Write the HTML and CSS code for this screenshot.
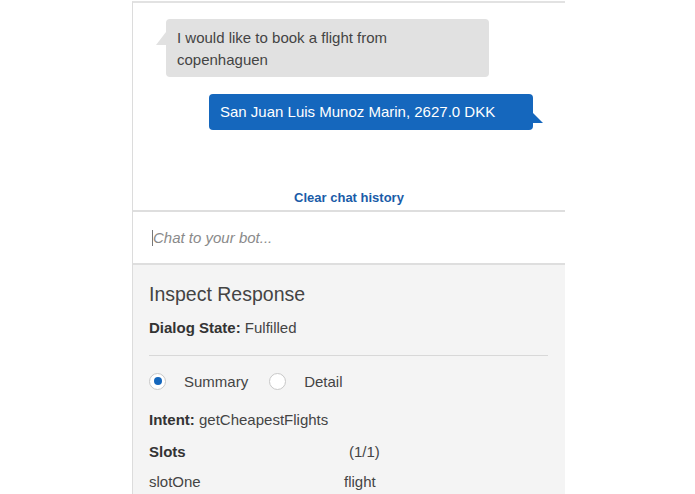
FILE: index.html
```html
<!DOCTYPE html>
<html>
<head>
<meta charset="utf-8">
<link rel="stylesheet" href="styles.css">
</head>
<body>
<div class="panel">
  <div class="chat">
    <div class="row left">
      <div class="bubble gray">I would like to book a flight from copenhaguen</div>
    </div>
    <div class="row right">
      <div class="bubble blue">San Juan Luis Munoz Marin, 2627.0 DKK</div>
    </div>
    <div class="clear">Clear chat history</div>
  </div>
  <div class="input">
    <span class="caret"></span><span class="placeholder">Chat to your bot...</span>
  </div>
  <div class="inspect">
    <h2 class="title">Inspect Response</h2>
    <div class="state"><b>Dialog State:</b> Fulfilled</div>
    <hr class="sep">
    <div class="radios">
      <span class="radio on"></span><span class="rlabel">Summary</span>
      <span class="radio"></span><span class="rlabel">Detail</span>
    </div>
    <div class="intent"><b>Intent:</b> getCheapestFlights</div>
    <div class="slots head"><b class="k">Slots</b><span class="v">(1/1)</span></div>
    <div class="slots row2"><span class="k">slotOne</span><span class="v2">flight</span></div>
  </div>
</div>
</body>
</html>
```
FILE: styles.css
```css
html, body {
  margin: 0;
  padding: 0;
  background: #fff;
  font-family: "Liberation Sans", Arial, sans-serif;
  color: #444;
}
.panel {
  margin-left: 132px;
  margin-top: 1px;
  width: 432px;
  border-left: 1px solid #dcdcdc;
  border-top: 2px solid #e2e2e2;
  height: 493px;
  overflow: hidden;
  display: flex;
  flex-direction: column;
}
.chat {
  height: 207px;
  display: flex;
  flex-direction: column;
}
.row {
  display: flex;
}
.row.left {
  padding-left: 33px;
  padding-top: 16px;
}
.row.right {
  padding-left: 76px;
  padding-top: 17px;
}
.bubble {
  position: relative;
  font-size: 15px;
  line-height: 22px;
  border-radius: 4px;
}
.bubble.gray {
  background: #e1e1e1;
  color: #444;
  width: 301px;
  padding: 8px 11px 6px 11px;
  height: 44px;
}
.bubble.gray::before {
  content: "";
  position: absolute;
  left: -10px;
  top: 13px;
  border-right: 10px solid #e1e1e1;
  border-top: 13px solid transparent;
}
.bubble.blue {
  background: #1567bd;
  color: #fff;
  width: 302px;
  padding: 7px 11px;
  height: 22px;
}
.bubble.blue::after {
  content: "";
  position: absolute;
  right: -10px;
  top: 19px;
  border-left: 10px solid #1567bd;
  border-top: 10px solid transparent;
}
.clear {
  margin-top: auto;
  text-align: center;
  font-size: 13px;
  font-weight: bold;
  color: #1a5ca8;
  padding-bottom: 5px;
}
.input {
  border-top: 2px solid #dedede;
  border-bottom: 2px solid #dedede;
  height: 51px;
  display: flex;
  align-items: center;
  padding-left: 19px;
}
.caret {
  width: 1px;
  height: 16px;
  background: #777;
}
.placeholder {
  font-style: italic;
  font-size: 15px;
  color: #8a8a8a;
}
.inspect {
  flex: 1;
  background: #f4f4f4;
  padding: 0 16px;
  font-size: 15px;
  color: #444;
}
.title {
  font-size: 19.5px;
  font-weight: normal;
  margin: 17px 0 0 0;
  line-height: 24px;
  color: #444;
}
.state {
  margin-top: 12px;
  line-height: 20px;
}
b { color: #333; }
.sep {
  border: 0;
  border-top: 1px solid #d8d8d8;
  margin: 17px 0 0 0;
  width: 399px;
}
.radios {
  display: flex;
  align-items: center;
  margin-top: 15px;
  height: 20px;
}
.radio {
  width: 17px;
  height: 17px;
  border-radius: 50%;
  border: 1px solid #c8c8c8;
  background: #fff;
  box-sizing: border-box;
  position: relative;
}
.radio.on::after {
  content: "";
  position: absolute;
  left: 3.5px;
  top: 3.5px;
  width: 8px;
  height: 8px;
  border-radius: 50%;
  background: #1567bd;
}
.rlabel {
  margin-left: 18px;
  margin-right: 21px;
}
.intent {
  margin-top: 19px;
  line-height: 20px;
}
.slots {
  display: flex;
  line-height: 20px;
  margin-top: 12px;
}
.slots.row2 { margin-top: 10px; }
.slots .k { width: 200px; }
.slots .v2 { margin-left: -5px; }
```
